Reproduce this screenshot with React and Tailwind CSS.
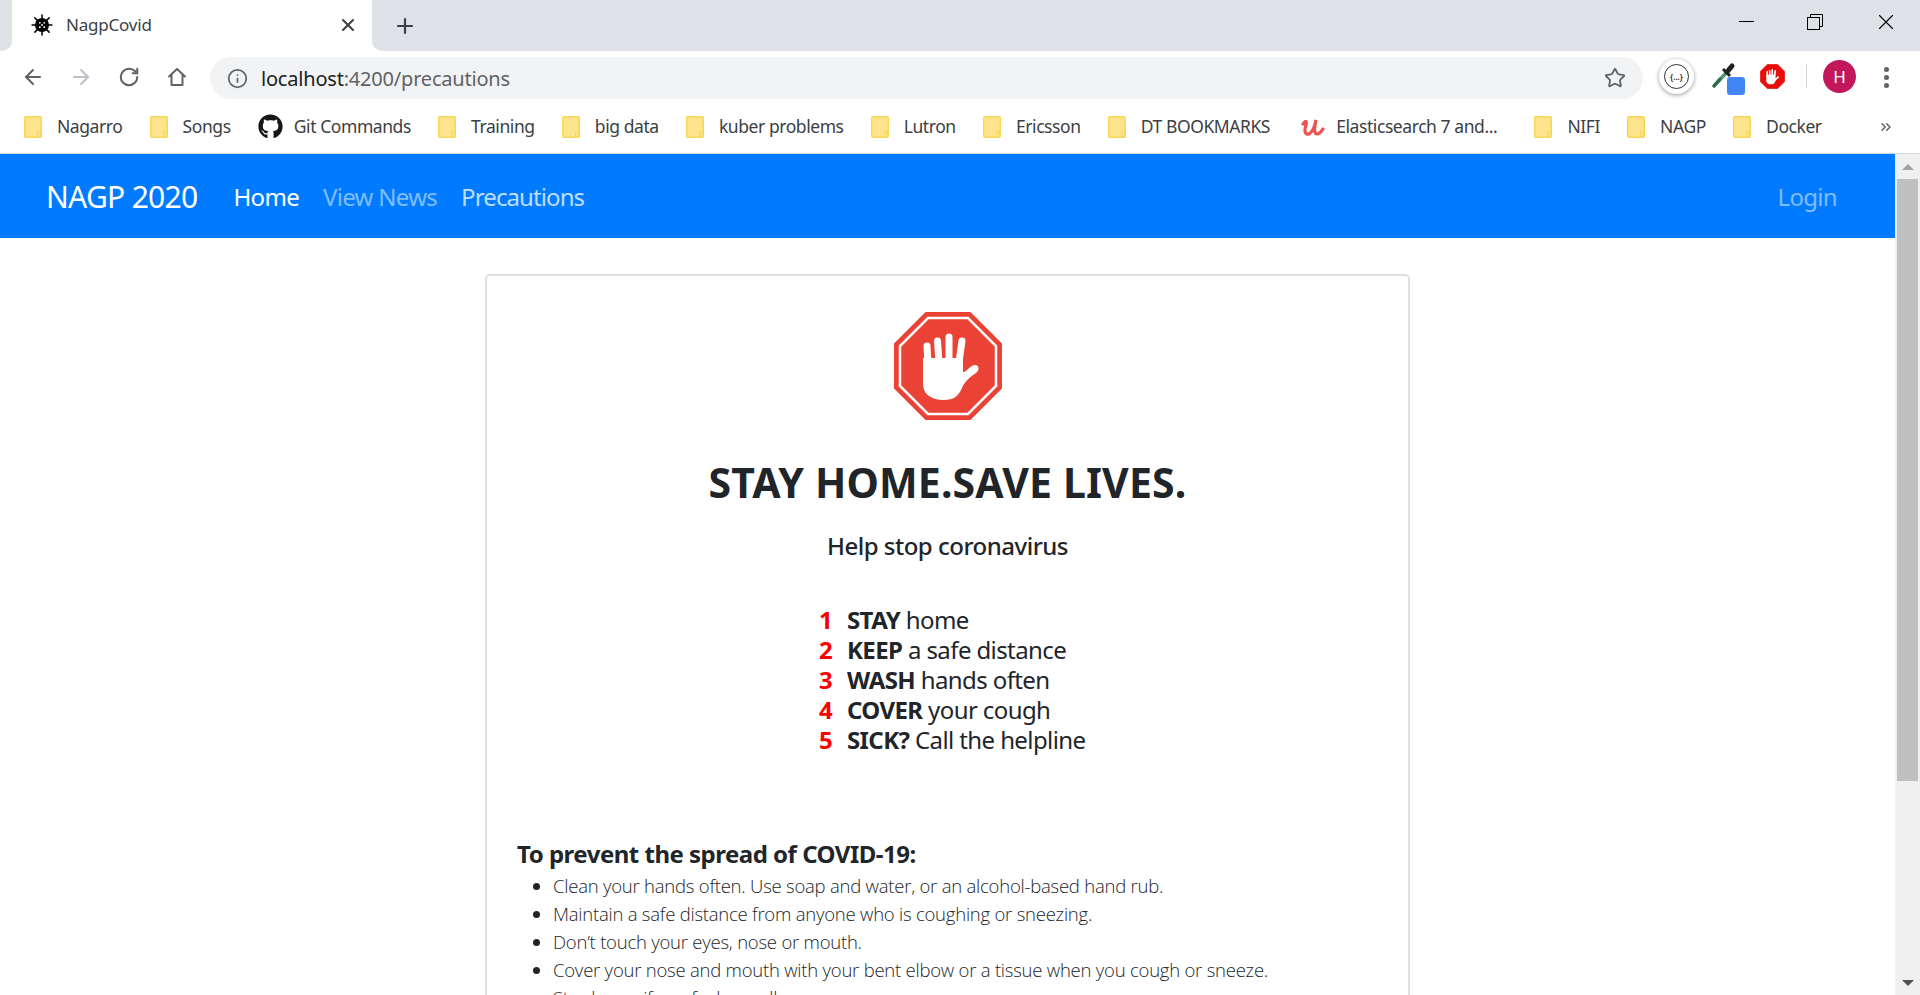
import React from 'react';
import { ArrowLeft, ArrowRight, RotateCw, Info, Star, X, Plus, ChevronsRight } from 'lucide-react';
import { FaGithub } from 'react-icons/fa';

const bookmarks = ['Nagarro', 'Songs', 'Git Commands', 'Training', 'big data', 'kuber problems', 'Lutron', 'Ericsson', 'DT BOOKMARKS', 'Elasticsearch 7 and...', 'NIFI', 'NAGP', 'Docker'];

const steps = [
  ['1', 'STAY', 'home'],
  ['2', 'KEEP', 'a safe distance'],
  ['3', 'WASH', 'hands often'],
  ['4', 'COVER', 'your cough'],
  ['5', 'SICK?', 'Call the helpline'],
];

const tips = [
  'Clean your hands often. Use soap and water, or an alcohol-based hand rub.',
  'Maintain a safe distance from anyone who is coughing or sneezing.',
  "Don’t touch your eyes, nose or mouth.",
  'Cover your nose and mouth with your bent elbow or a tissue when you cough or sneeze.',
  'Stay home if you feel unwell.',
];

const HAND = 'M29 46 L29 72 C29 82 37 88 50 88 C60 88 64 84 67 78 C70 71 74 66 82 61 C86 58 85 53 81 53 C77 53 74 58 70 60 L69 60 L69 46 Z';

const HandShape = () => (
  <g>
    <path d={HAND} fill="#fff" />
    <g stroke="#fff" strokeWidth="7" strokeLinecap="round">
      <line x1="33" y1="34" x2="34" y2="52" />
      <line x1="43.5" y1="29" x2="45" y2="50" />
      <line x1="55" y1="25" x2="55" y2="50" />
      <line x1="68" y1="29" x2="65" y2="50" />
    </g>
  </g>
);

const StopSign = () => (
  <svg width="108" height="108" viewBox="0 0 108 108" className="block mx-auto">
    <polygon points="32,1 76,1 107,32 107,76 76,107 32,107 1,76 1,32" fill="#ea4335" stroke="#ea4335" strokeWidth="2" strokeLinejoin="round" />
    <polygon points="34,6 74,6 102,34 102,74 74,102 34,102 6,74 6,34" fill="none" stroke="#fff" strokeWidth="2.5" />
    <HandShape />
  </svg>
);

const Folder = () => (
  <svg width="18" height="22" viewBox="0 0 18 22" className="shrink-0">
    <rect x="0.75" y="0.75" width="16.5" height="20.5" rx="1" fill="#fee58d" stroke="#f6d757" strokeWidth="1.5" />
    <path d="M13.5 21 V17 a1.5 1.5 0 0 1 3 0 V21" fill="none" stroke="#f6d757" strokeWidth="1.2" />
  </svg>
);

const VirusIcon = () => (
  <svg width="22" height="22" viewBox="0 0 20 20" className="shrink-0">
    <g stroke="#000" strokeWidth="1.4" strokeLinecap="round">
      <line x1="10" y1="1" x2="10" y2="19" />
      <line x1="1" y1="10" x2="19" y2="10" />
      <line x1="3.5" y1="3.5" x2="16.5" y2="16.5" />
      <line x1="16.5" y1="3.5" x2="3.5" y2="16.5" />
    </g>
    <circle cx="10" cy="10" r="6.4" fill="#000" />
    <g fill="#fff">
      <circle cx="8" cy="8" r="0.8" />
      <circle cx="12" cy="8" r="0.8" />
      <circle cx="8" cy="12" r="0.8" />
      <circle cx="12" cy="12" r="0.8" />
      <circle cx="10" cy="10" r="0.8" />
    </g>
  </svg>
);

const UdemyIcon = () => (
  <svg width="24" height="22" viewBox="0 0 24 22" className="shrink-0">
    <path d="M2 8 C5 4 6 5 5 9 C3 15 4 19 8 18 C12 16 14 9 15 4 C13 12 13 18 16 18 C18 18 20 16 22 13" fill="none" stroke="#ec5252" strokeWidth="3.2" strokeLinecap="round" />
  </svg>
);

const HomeIcon = () => (
  <svg width="20" height="20" viewBox="0 0 20 20" fill="none" stroke="#5f6368" strokeWidth="2" strokeLinejoin="round">
    <path d="M1.5 10 L10 2 L18.5 10 M4.5 8 V18 H15.5 V8" />
  </svg>
);

const Dropper = () => (
  <svg width="30" height="34" viewBox="0 0 30 34" className="absolute left-0 top-0">
    <line x1="3" y1="25" x2="15" y2="12" stroke="#4c9a6a" strokeWidth="3.5" strokeLinecap="round" />
    <line x1="3" y1="25" x2="9" y2="18" stroke="#2f6b46" strokeWidth="3" strokeLinecap="round" />
    <line x1="12" y1="8" x2="19" y2="15" stroke="#222" strokeWidth="3" />
    <line x1="16" y1="11" x2="21" y2="5" stroke="#222" strokeWidth="5" strokeLinecap="round" />
  </svg>
);

const AdBlock = () => (
  <svg width="25" height="25" viewBox="0 0 108 108">
    <polygon points="32,1 76,1 107,32 107,76 76,107 32,107 1,76 1,32" fill="#e80e0b" stroke="#e80e0b" strokeWidth="2" />
    <g transform="translate(-2,0)"><HandShape /></g>
  </svg>
);

const bookmarkClass = (name) => {
  if (name === 'NIFI') return 'flex items-center ml-[10px]';
  if (name.startsWith('Elastic')) return 'flex items-center ml-[4px]';
  return 'flex items-center';
};

const App = () => {
  return (
    <div className="h-[995px] w-[1920px] overflow-hidden flex flex-col bg-white font-['Noto_Sans',sans-serif] text-[#212529]">
      {/* tab strip */}
      <div className="h-[51px] flex shrink-0 bg-white">
        <div className="w-[12px] bg-[#dee1e6] rounded-br-[10px]" />
        <div className="w-[360px] rounded-t-[10px] bg-white flex items-center pl-[19px] pr-[15px] pb-[2px]">
          <VirusIcon />
          <span className="ml-[13px] text-[17px] tracking-[-0.2px] text-[#3c4043]">NagpCovid</span>
          <X size={20} strokeWidth={2.5} className="ml-auto text-[#3c4043] mr-[-1px]" />
        </div>
        <div className="flex-1 bg-[#dee1e6] rounded-bl-[10px] flex items-center relative">
          <Plus size={24} strokeWidth={2.2} className="ml-[21px] text-[#3c4043]" />
          <div className="ml-auto flex items-center h-full pb-[8px] text-black">
            <div className="w-[15px] h-px bg-black mr-[53px]" />
            <svg width="16" height="16" viewBox="0 0 16 16" fill="none" stroke="#000" strokeWidth="1" className="mr-[50px]">
              <rect x="0.5" y="3.5" width="12" height="12" fill="#dee1e6" />
              <path d="M3.5 3.5 V0.5 H15.5 V12.5 H12.5" />
            </svg>
            <X size={26} strokeWidth={1} className="mr-[21px]" />
          </div>
        </div>
      </div>

      {/* address bar */}
      <div className="h-[51px] pt-[6px] flex shrink-0 text-[#5f6368]">
        <div className="w-[210px] flex items-start pl-[21px] pt-[8px]">
          <ArrowLeft size={24} strokeWidth={2} />
          <ArrowRight size={24} strokeWidth={2} className="ml-[24px] text-[#bdc1c6]" />
          <RotateCw size={22} strokeWidth={2.2} className="ml-[25px] mt-px" />
          <div className="ml-[27px] mt-[2px]"><HomeIcon /></div>
        </div>
        <div className="w-[1433px] h-[42px] rounded-full bg-[#f1f3f4] flex items-center pl-[17px] pr-[17px]">
          <Info size={21} strokeWidth={2} />
          <span className="ml-[13px] mt-[2px] text-[20px] tracking-[-0.2px]"><span className="text-[#202124]">localhost</span>:4200/precautions</span>
          <Star size={22} strokeWidth={2} className="ml-auto" />
        </div>
        <div className="flex items-start pt-[4px]">
          <div className="ml-[16px] mt-[-2px] w-[35px] h-[35px] rounded-full bg-white shadow-[0_1px_4px_rgba(0,0,0,0.4)] flex items-center justify-center">
            <div className="w-[25px] h-[25px] rounded-full border-[1.5px] border-[#333] flex items-center justify-center text-[8px] leading-none text-[#222] font-semibold">{'{...}'}</div>
          </div>
          <div className="relative ml-[17px] w-[36px] h-[38px]">
            <Dropper />
            <div className="absolute left-[16px] top-[16px] w-[18px] h-[18px] rounded-[3px] bg-[#4285f4]" />
          </div>
          <div className="ml-[13px] mt-[3px]"><AdBlock /></div>
          <div className="ml-[21px] mt-[3px] w-px h-[24px] bg-[#d5d7da]" />
          <div className="ml-[16px] mt-[-1px] w-[33px] h-[33px] rounded-full bg-[#c2185b] flex items-center justify-center text-white text-[17px]">H</div>
          <div className="ml-[28px] mt-[6px] flex flex-col gap-[3px]">
            <div className="w-[5px] h-[5px] rounded-full bg-[#5f6368]" />
            <div className="w-[5px] h-[5px] rounded-full bg-[#5f6368]" />
            <div className="w-[5px] h-[5px] rounded-full bg-[#5f6368]" />
          </div>
        </div>
      </div>

      {/* bookmarks */}
      <div className="h-[52px] flex items-center shrink-0 pl-[24px] pb-[2px] border-b border-[#d3d5d8] gap-[27.2px] text-[17.5px] tracking-[-0.43px] text-[#3c4043]">
        {bookmarks.map((name) => (
          <div key={name} className={bookmarkClass(name)}>
            {name === 'Git Commands' ? (
              <FaGithub size={25} className="text-[#161614] mr-[11px] shrink-0" />
            ) : name.startsWith('Elastic') ? (
              <div className="mr-[11px]"><UdemyIcon /></div>
            ) : (
              <div className="mr-[15px]"><Folder /></div>
            )}
            <span className="whitespace-nowrap">{name}</span>
          </div>
        ))}
        <ChevronsRight size={16} strokeWidth={2.2} className="ml-auto mr-[26px] text-[#5f6368]" />
      </div>

      {/* page */}
      <div className="flex-1 flex min-h-0">
        <div className="flex-1 min-w-0">
          <nav className="h-[84px] bg-[#007bff] flex items-center pl-[46px] pr-[58px] pt-px text-[24px] tracking-[-0.7px]">
            <span className="text-[30px] text-white mr-[36px] tracking-[-0.7px]">NAGP 2020</span>
            <span className="text-white">Home</span>
            <span className="text-white/50 ml-[24px]">View News</span>
            <span className="text-white/75 ml-[24px] tracking-[-0.9px]">Precautions</span>
            <span className="text-white/50 ml-auto">Login</span>
          </nav>

          <div className="w-[925px] ml-[485px] mt-[36px] border-2 border-[#dfdfdf] rounded-[5px] pt-[36px] px-[30px] pb-[30px]">
            <StopSign />
            <h1 className="mt-[38px] text-center text-[41px] leading-[48px] font-bold tracking-[0.15px]">STAY HOME.SAVE LIVES.</h1>
            <h2 className="mt-[24px] text-center text-[24px] leading-[32px] font-medium tracking-[-0.5px]">Help stop coronavirus</h2>

            <div className="mt-[43px] ml-[302px] text-[24px] leading-[30px] tracking-[-0.6px]">
              {steps.map(([num, word, rest]) => (
                <div key={num} className="flex">
                  <span className="w-[28px] text-[#ff0000] font-bold">{num}</span>
                  <span><b className="font-bold">{word}</b> {rest}</span>
                </div>
              ))}
            </div>

            <h3 className="mt-[83px] text-[24px] leading-[32px] font-bold tracking-[-0.5px]">To prevent the spread of COVID-19:</h3>
            <ul className="mt-[2px] list-disc pl-[36px] font-['Open_Sans',sans-serif] text-[18.5px] leading-[28px] font-light tracking-[-0.23px]">
              {tips.map((tip) => (
                <li key={tip}>{tip}</li>
              ))}
            </ul>
          </div>
        </div>

        {/* scrollbar */}
        <div className="w-[25px] shrink-0 bg-[#f0f0f0] pl-[2px] pr-[2px] flex flex-col items-center">
          <div className="h-[25px] flex items-center justify-center">
            <div className="w-0 h-0 border-x-[6px] border-x-transparent border-b-[6px] border-b-[#a3a3a3]" />
          </div>
          <div className="w-[21px] h-[602px] bg-[#c0c0c0]" />
          <div className="mt-auto h-[25px] flex items-center justify-center">
            <div className="w-0 h-0 border-x-[6px] border-x-transparent border-t-[6px] border-t-[#505050]" />
          </div>
        </div>
      </div>
    </div>
  );
};

export default App;
